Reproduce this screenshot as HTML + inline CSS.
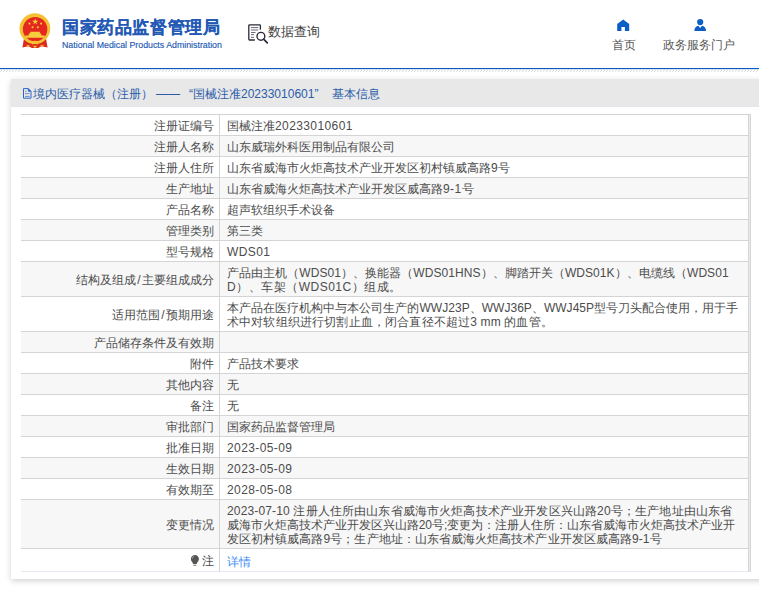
<!DOCTYPE html>
<html><head><meta charset="utf-8">
<style>
*{margin:0;padding:0;box-sizing:border-box}
html,body{width:759px;height:591px;overflow:hidden;background:#fff;font-family:"Liberation Sans",sans-serif;color:#333}
.hdr{position:absolute;left:0;top:0;width:759px;height:68px}
.emb{position:absolute;left:14px;top:8px;width:42px;height:44px}
.t1{position:absolute;left:62px;top:17px;font-size:17px;font-weight:bold;-webkit-text-stroke:0.12px #2359b4;letter-spacing:0.6px;color:#2359b4;line-height:22px;white-space:nowrap}
.t2{position:absolute;left:62px;top:39px;font-size:8.8px;color:#2359b4;-webkit-text-stroke:0.15px #2359b4;line-height:12px;white-space:nowrap}
.sj{position:absolute;left:244px;top:20px;width:26px;height:26px}
.sjt{position:absolute;left:268px;top:22px;font-size:13px;color:#404040;line-height:20px;white-space:nowrap}
.nav1{position:absolute;left:612px;top:37px;font-size:12px;color:#555;line-height:16px;white-space:nowrap}
.nav2{position:absolute;left:663px;top:37px;font-size:12px;color:#555;line-height:16px;white-space:nowrap}
.ic1{position:absolute;left:610px;top:14px;width:30px;height:22px}
.ic2{position:absolute;left:686px;top:14px;width:30px;height:22px}
.bline{position:absolute;left:0;top:68px;width:759px;height:1px;background:#0a5cc0;box-shadow:0 0.5px 0 rgba(10,92,192,.35)}
.dots{position:absolute;left:0;top:70px;width:759px;height:2px;
 background-image:repeating-linear-gradient(90deg,transparent 0 1px,#dcdcdc 1px 2px,transparent 2px 3px),repeating-linear-gradient(90deg,#dcdcdc 0 1px,transparent 1px 3px);
 background-size:100% 1px,100% 1px;background-position:0 0,0 1px;background-repeat:no-repeat}
.panel{position:absolute;left:11px;top:79px;width:760px;height:500px;background:#fff;box-shadow:0 2px 6px rgba(0,0,0,.18)}
.ph{position:absolute;left:0;top:0;width:100%;height:28px;background:#e8e8e8;border-bottom:1px solid #e3e7ee}
.pht{position:absolute;left:22px;top:6px;font-size:12px;color:#2a5ca8;line-height:18px;white-space:nowrap}
.doc{position:absolute;left:7px;top:5px;width:20px;height:18px}
table{position:absolute;left:21px;top:114px;width:728px;border-collapse:separate;border-spacing:0;border-top:1px solid #d4d4d4;font-size:12px;color:#4c4c4c;table-layout:fixed}
td{text-spacing-trim:space-all;border-bottom:1px solid #d4d4d4;border-right:1px solid #d4d4d4;line-height:14px;padding:4px 4px 2px 7px;vertical-align:middle;white-space:nowrap}
td.l{width:199px;text-align:right;padding:4px 5px 2px 0}
tr:nth-child(even) td{background:#f7f7f7}
.n{letter-spacing:0.4px}
tr.last td{border-bottom-color:#e4e8f0;height:23px}
.rb{position:absolute;left:749px;top:114px;width:2px;height:458px;background:#e9edf3;border-right:1px solid #d4d4d4;border-top:1px solid #d4d4d4}
</style></head><body>
<div class="hdr">
 <svg class="emb" viewBox="14 8 42 44">
  <path d="M24 38.5 L22.4 47.6 L28.5 46.2 L32 48 H38 L41.5 46.2 L47.6 47.6 L46 38.5 Z" fill="#dc2a20"/>
  <circle cx="34.9" cy="28.6" r="15.4" fill="#f3c131"/>
  <circle cx="35.1" cy="29.2" r="12.2" fill="#e4281f"/>
  <path d="M35.2 18.6 l.75 2.2 h2.3 l-1.85 1.35 .7 2.2 -1.9-1.35 -1.9 1.35 .7-2.2 -1.85-1.35 h2.3z" fill="#f7d23b"/>
  <circle cx="29.4" cy="23.6" r="1.05" fill="#f5cd3a"/><circle cx="41.1" cy="23.6" r="1.05" fill="#f5cd3a"/>
  <circle cx="32.6" cy="27.2" r="1.05" fill="#f5cd3a"/><circle cx="37.8" cy="27.2" r="1.05" fill="#f5cd3a"/>
  <path d="M30.2 31.8 H39.8 V33.6 H41.2 V35.4 H44.6 V37.8 H25.4 V35.4 H28.8 V33.6 H30.2 Z" fill="#f6cf3d"/>
  <path d="M23 41 Q35 46.5 47 41 L46.4 39.6 Q35 44.6 23.6 39.6 Z" fill="#f3c131" opacity="0"/>
  <path d="M31.5 41.8 Q35 39.8 38.5 41.8 L37.8 44.4 Q35 43.2 32.2 44.4 Z" fill="#f3c131"/>
  <path d="M26 44.8 L28.2 47.6 L30 45.6 Z M44 44.8 L41.8 47.6 L40 45.6 Z M33.2 45.8 H36.8 L36 47.6 H34Z" fill="#f3c131"/>
 </svg>
 <div class="t1">国家药品监督管理局</div>
 <div class="t2">National Medical Products Administration</div>
 <svg class="sj" viewBox="244 20 26 26">
  <path d="M254.8 40 H249.6 Q248.8 40 248.8 39.2 V25.6 Q248.8 24.8 249.6 24.8 H259.6 Q260.4 24.8 260.4 25.6 V29.8" fill="none" stroke="#2b2b3d" stroke-width="1.3"/>
  <path d="M251 27.6h7.3 M251 30h7.3 M251 32.5h4.5 M251 34.6h3 M251 37.3h3" stroke="#6a6a78" stroke-width="1"/>
  <circle cx="260.9" cy="36.3" r="3.9" fill="none" stroke="#2b2b3d" stroke-width="1.4"/>
  <path d="M263.6 39.1 L267.3 42.9" stroke="#2b2b3d" stroke-width="1.7" stroke-linecap="round"/>
 </svg>
 <div class="sjt">数据查询</div>
 <svg class="ic1" viewBox="610 14 30 22"><path d="M623.2 19.6 L629.2 24.1 V30.9 H624.9 V27 H621.4 V30.9 H617.2 V24.1 Z" fill="#0a5ec6"/></svg>
 <svg class="ic2" viewBox="686 14 30 22"><circle cx="700.2" cy="22.1" r="3.1" fill="#0a5ec6"/><path d="M698.4 25.8 L700.2 27.9 L702 25.8 Q705.6 26.3 706.1 31 H694.3 Q694.8 26.3 698.4 25.8 Z" fill="#0a5ec6"/></svg>
 <div class="nav1">首页</div>
 <div class="nav2">政务服务门户</div>
</div>
<div class="bline"></div>
<div class="dots"></div>
<div class="panel">
 <div class="ph">
  <svg class="doc" viewBox="18 84 20 18"><path d="M23.5 88.6 H28.4 L31 91.3 V98.2 H23.5 Z" fill="none" stroke="#1f5fc2" stroke-width="0.95" stroke-linejoin="round"/><path d="M28.4 88.8 V91.3 H30.8" fill="#1f5fc2" stroke="#1f5fc2" stroke-width="0.8"/><path d="M25 91.3 H26.6 M25 93.6 H29.6 M25 96.4 H29.6" stroke="#5a7fd0" stroke-width="0.9"/></svg>
  <div class="pht"><span style="position:absolute;left:0">境内医疗器械（注册）</span><span style="position:absolute;left:123px">——</span><span style="position:absolute;left:156px">“国械注准20233010601”</span><span style="position:absolute;left:299px">基本信息</span></div>
 </div>
</div>
<table>
<tr><td class="l">注册证编号</td><td>国械注准<span class="n">20233010601</span></td></tr>
<tr><td class="l">注册人名称</td><td>山东威瑞外科医用制品有限公司</td></tr>
<tr><td class="l">注册人住所</td><td>山东省威海市火炬高技术产业开发区初村镇威高路<span class="n">9</span>号</td></tr>
<tr><td class="l">生产地址</td><td>山东省威海火炬高技术产业开发区威高路<span class="n">9-1</span>号</td></tr>
<tr><td class="l">产品名称</td><td>超声软组织手术设备</td></tr>
<tr><td class="l">管理类别</td><td>第三类</td></tr>
<tr><td class="l">型号规格</td><td><span class="n">WDS01</span></td></tr>
<tr><td class="l">结构及组成<span style="margin:0 1.5px">/</span>主要组成成分</td><td><span style="letter-spacing:0.06px">产品由主机（WDS01）、换能器（WDS01HNS）、脚踏开关（WDS01K）、电缆线（WDS01</span><br><span style="letter-spacing:0.5px">D）、车架（WDS01C）组成。</span></td></tr>
<tr><td class="l">适用范围<span style="margin:0 1.5px">/</span>预期用途</td><td><span style="letter-spacing:0.03px">本产品在医疗机构中与本公司生产的WWJ23P、WWJ36P、WWJ45P型号刀头配合使用，用于手</span><br><span style="letter-spacing:0.16px">术中对软组织进行切割止血，闭合直径不超过3 mm 的血管。</span></td></tr>
<tr><td class="l">产品储存条件及有效期</td><td></td></tr>
<tr><td class="l">附件</td><td>产品技术要求</td></tr>
<tr><td class="l">其他内容</td><td>无</td></tr>
<tr><td class="l">备注</td><td>无</td></tr>
<tr><td class="l">审批部门</td><td>国家药品监督管理局</td></tr>
<tr><td class="l">批准日期</td><td><span class="n">2023-05-09</span></td></tr>
<tr><td class="l">生效日期</td><td><span class="n">2023-05-09</span></td></tr>
<tr><td class="l">有效期至</td><td><span class="n">2028-05-08</span></td></tr>
<tr><td class="l">变更情况</td><td><span style="letter-spacing:0.15px">2023-07-10 注册人住所由山东省威海市火炬高技术产业开发区兴山路20号；生产地址由山东省</span><br><span style="letter-spacing:-0.02px">威海市火炬高技术产业开发区兴山路20号;变更为：注册人住所：山东省威海市火炬高技术产业开</span><br><span style="letter-spacing:0.07px">发区初村镇威高路9号；生产地址：山东省威海火炬高技术产业开发区威高路9-1号</span></td></tr>
<tr class="last"><td class="l">注</td><td><span style="color:#3a8cf5;position:relative;top:1px">详情</span></td></tr>
</table>
<div class="rb"></div>
<svg style="position:absolute;left:186px;top:550px;width:30px;height:20px" viewBox="186 550 30 20"><path d="M194.9 554.9 C197.3 554.9 198.9 556.6 198.9 558.9 C198.9 560.6 197.9 561.5 197.3 562.4 C196.9 563 196.8 563.5 196.8 563.9 H193 C193 563.5 192.9 563 192.5 562.4 C191.9 561.5 190.9 560.6 190.9 558.9 C190.9 556.6 192.5 554.9 194.9 554.9 Z" fill="#555"/><path d="M192.4 558.6 C192.4 557 193.3 556.2 194.4 555.9" fill="none" stroke="#b8bcc0" stroke-width="0.8"/><path d="M193.4 565.3 H196.2" stroke="#666" stroke-width="1"/></svg>
</body></html>
